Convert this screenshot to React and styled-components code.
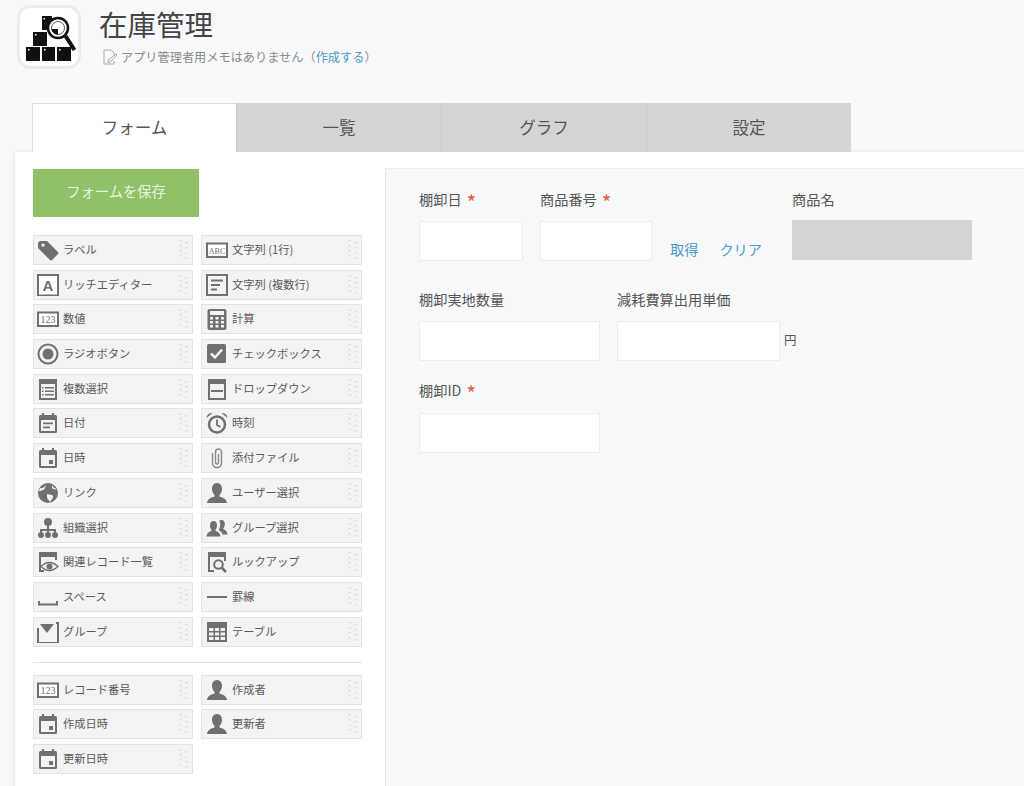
import React from 'react';
import styled, { createGlobalStyle } from 'styled-components';

const GlobalStyle = createGlobalStyle`
  html, body {
    margin: 0;
    height: 786px;
    overflow: hidden;
    background: #f8f9fb;
    font-family: "Noto Sans CJK JP", "Noto Sans", sans-serif;
    color: #555;
  }
  * { box-sizing: border-box; }
`;

const Header = styled.header`
  display: flex;
  gap: 18px;
  padding: 5px 0 0 17px;
`;

const AppIcon = styled.div`
  width: 64px;
  height: 64px;
  background: #fff;
  border: 3px solid #ececec;
  border-radius: 13px;
  display: flex;
  align-items: center;
  justify-content: center;
  svg { display: block; }
`;

const Title = styled.h1`
  margin: 0;
  font-size: 28.5px;
  line-height: 38px;
  font-weight: 400;
  color: #444;
`;

const Memo = styled.div`
  display: flex;
  align-items: center;
  gap: 3px;
  margin: 5px 0 0 3px;
  font-size: 12.2px;
  line-height: 18px;
  color: #8a8a8a;
  a { color: #4a9ac4; text-decoration: none; }
`;

const Tabs = styled.nav`
  position: relative;
  z-index: 2;
  display: flex;
  margin: 34px 0 0 32px;
`;

const Tab = styled.div`
  width: ${p => (p.$active ? 204 : 205)}px;
  height: 49px;
  display: flex;
  align-items: center;
  justify-content: center;
  font-size: 16.5px;
  color: #555;
  background: ${p => (p.$active ? '#fff' : '#d3d5d4')};
  border-left: 1px solid ${p => (p.$active ? '#ddd' : '#c6cac8')};
  border-top: 1px solid ${p => (p.$active ? '#ddd' : '#d3d5d4')};
  padding-bottom: 2px;
`;

const Panel = styled.main`
  display: flex;
  margin-left: 15px;
  height: 640px;
  background: #fff;
  padding-top: 16px;
  box-shadow: 0 0 5px rgba(0, 0, 0, 0.1);
`;

const Sidebar = styled.aside`
  width: 370px;
  flex: none;
  padding: 1px 0 0 18px;
`;

const SaveButton = styled.button`
  display: block;
  width: 166px;
  height: 48px;
  border: 0;
  padding: 0 0 5px;
  background: #8fc168;
  color: #e9f5df;
  font: inherit;
  font-size: 14.3px;
`;

const Palette = styled.div`
  display: grid;
  grid-template-columns: 160px 161px;
  column-gap: 8px;
  row-gap: 4.7px;
  width: 329px;
  margin-top: ${p => p.$top || 0}px;
`;

const Item = styled.div`
  display: flex;
  align-items: center;
  gap: 4px;
  height: 30px;
  padding: 0 3px;
  background: #f3f3f3;
  border: 1px solid #e2e2e2;
  font-size: 11.25px;
  color: #5a5a5a;
  white-space: nowrap;
  &:nth-child(even) { padding-left: 4px; }
  span { padding-bottom: 2px; }
`;

const Handle = styled.svg`
  margin-left: auto;
  flex: none;
`;

const Divider = styled.hr`
  width: 329px;
  margin: 15px 0 12px;
  border: 0;
  border-top: 1px solid #e3e3e3;
`;

const Canvas = styled.section`
  flex: 1;
  min-width: 0;
  background: #f8f9fb;
  border-top: 1px solid #eceeee;
  border-left: 1px solid #e6e8e8;
  padding: 20px 0 0 33px;
`;

const Row = styled.div`
  display: flex;
  gap: 17px;
  margin-bottom: ${p => p.$mb || 0}px;
`;

const Field = styled.div`
  display: flex;
  flex-direction: column;
  flex: none;
`;

const Label = styled.label`
  display: flex;
  gap: 5px;
  height: ${p => p.$h || 20}px;
  font-size: 14.2px;
  line-height: 20px;
  color: #555;
  margin-bottom: 12px;
`;

const Required = styled.span`
  color: #e8584c;
  font-size: 21px;
  line-height: 26px;
`;

const Input = styled.input`
  display: block;
  width: ${p => p.$w}px;
  height: 40px;
  padding: 0 6px;
  background: #fff;
  border: 1px solid #eceeee;
  outline: 0;
`;

const ReadOnlyBox = styled.div`
  width: 180px;
  height: 40px;
  margin-top: -1px;
  background: #d3d4d3;
`;

const Lookup = styled.div`
  display: flex;
  align-self: flex-end;
  gap: 21px;
  width: 106px;
  padding: 0 0 2px 1px;
  font-size: 14.2px;
  line-height: 20px;
  white-space: nowrap;
  a { color: #4a9ac4; text-decoration: none; }
`;

const InputWithUnit = styled.div`
  display: flex;
  align-items: center;
  gap: 4px;
  font-size: 12.5px;
  color: #555;
  span { padding-bottom: 4px; }
`;

const Frame = ({ children }) => (
  <svg width="22" height="22" viewBox="0 0 22 22" fill="#707070" style={{ flex: 'none' }}>
    {children}
  </svg>
);

const Num = ({ t, size }) => (
  <>
    <rect x="1" y="4.5" width="20" height="13.5" fill="#fff" stroke="#707070" strokeWidth="2" />
    <text x="11" y="14.8" textAnchor="middle" fontFamily="Liberation Serif, serif" fontSize={size} fill="#707070">{t}</text>
  </>
);

const CalTop = () => (
  <>
    <rect x="2" y="3" width="18" height="18" rx="1.5" fill="#707070" />
    <rect x="5" y="1" width="2" height="3" />
    <rect x="15" y="1" width="2" height="3" />
    <rect x="4" y="8" width="14" height="11" fill="#f3f3f3" />
  </>
);

const person = 'M11 1c3.5 0 5 3 5 6 0 3-1.5 5-2.5 6v1.5c3 1 7 2 7.5 6.5H1c.5-4.5 4.500-5.500 7.500-6.500V13C7.500 12 6 10 6 7c0-3 1.500-6 5-6z';

const glyphs = {
  tag: <path fillRule="evenodd" d="M1 5q0-3 3-3h6l11 11q1 1 0 2l-6 6q-1 1-2 0L1 9zM6 4.500a1.600 1.600 0 1 0 .01 0z" />,
  rich: (
    <>
      <rect x="1" y="1" width="20" height="20.500" fill="#fff" stroke="#707070" strokeWidth="2" />
      <text x="11" y="17" textAnchor="middle" fontFamily="Liberation Sans, sans-serif" fontWeight="700" fontSize="15" fill="#707070">A</text>
    </>
  ),
  num: <Num t="123" size="10" />,
  abc: <Num t="ABC" size="8" />,
  multi: (
    <>
      <rect x="1" y="1" width="20" height="20" fill="none" stroke="#707070" strokeWidth="2" />
      <path d="M5 5.500h12v2H5zM5 10h9v2H5zM5 14.500h6v2H5z" />
    </>
  ),
  calc: (
    <>
      <rect x="1.500" y="1" width="19" height="21" rx="2" />
      <rect x="4" y="3" width="14" height="4" fill="#f3f3f3" />
      <path d="M4 9h3v2.500H4zM9.500 9h3v2.500h-3zM15 9h3v2.500h-3zM4 13h3v2.500H4zM9.500 13h3v2.500h-3zM15 13h3v2.500h-3zM4 17h3v2.500H4zM9.500 17h3v2.500h-3zM15 17h3v2.500h-3z" fill="#f3f3f3" />
    </>
  ),
  radio: (
    <>
      <circle cx="11" cy="11" r="9.500" fill="none" stroke="#707070" strokeWidth="2" />
      <circle cx="11" cy="11" r="5.500" />
    </>
  ),
  check: (
    <>
      <rect x="1" y="1" width="19" height="19" rx="1.500" />
      <path d="M5 10.500l4 4 7-8" fill="none" stroke="#f3f3f3" strokeWidth="2.500" />
    </>
  ),
  list: (
    <>
      <rect x="2" y="1" width="18" height="21" />
      <rect x="4" y="6" width="14" height="14" fill="#f3f3f3" />
      <path d="M5 9h1.500v1.500H5zM8 9h9v1.500H8zM5 12.500h1.500V14H5zM8 12.500h9V14H8zM5 16h1.500v1.500H5zM8 16h9v1.500H8z" />
    </>
  ),
  dropdown: (
    <>
      <rect x="2" y="1" width="18" height="21" />
      <rect x="4" y="6" width="14" height="14" fill="#f3f3f3" />
      <rect x="5" y="12" width="12" height="2" />
    </>
  ),
  date: (
    <>
      <CalTop />
      <path d="M6 10.500h10v1.800H6zM6 14.500h7v1.800H6z" />
    </>
  ),
  datetime: (
    <>
      <CalTop />
      <rect x="12" y="13" width="4" height="4" />
    </>
  ),
  clock: (
    <>
      <circle cx="11" cy="12.500" r="8" fill="none" stroke="#707070" strokeWidth="2.500" />
      <path d="M11 7.500v5.500l3.500 2" fill="none" stroke="#707070" strokeWidth="1.800" />
      <path d="M.5 6Q1 1 6.500 1zM21.500 6Q21 1 15.500 1z" />
    </>
  ),
  clip: <path d="M6.500 6v10a4.500 4.500 0 0 0 9 0V5a3 3 0 0 0-6 0v10.500a1.500 1.500 0 0 0 3 0V7" fill="none" stroke="#8a8a8a" strokeWidth="1.400" />,
  link: (
    <>
      <circle cx="11" cy="11" r="10" />
      <path d="M3 6c3 1 4-1 6-3-1 3-1 4-3 5S3 9 2 9zM10 12l5 1c2 1 1 3 0 4l-2 3c-1-2-3-3-3-5zM15 3c1 2 2 3 5 4-2 1-4 0-5-1z" fill="#f3f3f3" />
    </>
  ),
  user: <path d={person} />,
  org: (
    <>
      <circle cx="11" cy="5" r="4" />
      <path d="M10 8h2v4h7v3h-2v-1h-5v1h-2v-1H5v1H3v-3h7z" />
      <circle cx="4" cy="18" r="3" />
      <circle cx="11" cy="18" r="3" />
      <circle cx="18" cy="18" r="3" />
    </>
  ),
  users: (
    <>
      <path d="M7.500 4c2.500 0 3.500 2 3.500 4.500S10 12 9.500 13v1c2 .7 4.500 1.500 5 5.500H.5c.5-4 3-4.800 5-5.500v-1C5 12 4 11 4 8.500S5 4 7.500 4z" />
      <path d="M15.500 3c2.300 0 3.300 2 3.300 4.200s-1 3.300-1.500 4v1c1.700.6 3.700 1.300 4.200 5.300h-5c-.5-2-2-3.500-3.500-4v-1.500c.8-1 1.200-2.500 1.200-4.500 0-1.500-.4-3-1-4 .6-.3 1.500-.5 2.300-.5z" />
    </>
  ),
  related: (
    <>
      <path d="M2 1h18v8h-2V6H4v13h3v2H2z" />
      <path d="M4 15.500Q12 7.500 21 15.500 12 23.500 4 15.500z" fill="#f3f3f3" stroke="#707070" strokeWidth="1.300" />
      <circle cx="12.500" cy="15.500" r="3" />
    </>
  ),
  lookup: (
    <>
      <path d="M2 1h18v9h-2V6H4v13h4v2H2z" />
      <circle cx="12.500" cy="13.500" r="4.300" fill="none" stroke="#707070" strokeWidth="2" />
      <path d="M15.500 16.500l4.500 4.500" stroke="#707070" strokeWidth="2.500" />
    </>
  ),
  space: <path d="M2 15v3.500h18V15" fill="none" stroke="#707070" strokeWidth="2" />,
  line: <rect x="1" y="10" width="20" height="2" />,
  group: (
    <>
      <path d="M3 3h14l-7 9z" />
      <path d="M1 7v15h20V2h-2" fill="none" stroke="#707070" strokeWidth="2" />
    </>
  ),
  table: (
    <>
      <rect x="1" y="1" width="20" height="20" />
      <path d="M3 7h4.500v3H3zM9 7h4v3H9zM14.500 7H19v3h-4.500zM3 11.500h4.500v3H3zM9 11.500h4v3H9zM14.500 11.500H19v3h-4.500zM3 16h4.500v3H3zM9 16h4v3H9zM14.500 16H19v3h-4.500z" fill="#f3f3f3" />
    </>
  ),
};

const fields = [
  ['tag', 'ラベル'], ['abc', '文字列 (1行)'],
  ['rich', 'リッチエディター'], ['multi', '文字列 (複数行)'],
  ['num', '数値'], ['calc', '計算'],
  ['radio', 'ラジオボタン'], ['check', 'チェックボックス'],
  ['list', '複数選択'], ['dropdown', 'ドロップダウン'],
  ['date', '日付'], ['clock', '時刻'],
  ['datetime', '日時'], ['clip', '添付ファイル'],
  ['link', 'リンク'], ['user', 'ユーザー選択'],
  ['org', '組織選択'], ['users', 'グループ選択'],
  ['related', '関連レコード一覧'], ['lookup', 'ルックアップ'],
  ['space', 'スペース'], ['line', '罫線'],
  ['group', 'グループ'], ['table', 'テーブル'],
];

const systemFields = [
  ['num', 'レコード番号'], ['user', '作成者'],
  ['datetime', '作成日時'], ['user', '更新者'],
  ['datetime', '更新日時'],
];

const Grip = () => (
  <Handle width="10" height="24" viewBox="0 0 10 24" fill="none" stroke="#d4d4d4" strokeWidth="1">
    {[2, 7, 12, 17].map(y => (
      <g key={y}>
        <path d={`M0 ${y + 1.500}l1.500-1.500 1.500 1.500`} />
        <path d={`M6 ${y + 3.500}l1.500-1.500 1.500 1.500`} />
      </g>
    ))}
  </Handle>
);

const renderItems = list => list.map(([icon, text]) => (
  <Item key={text}>
    <Frame>{glyphs[icon]}</Frame>
    <span>{text}</span>
    <Grip />
  </Item>
));

const StockIcon = () => (
  <svg width="58" height="58" viewBox="20 8 58 58">
    <path d="M42 16h10v14H42z" fill="#111" />
    <path d="M33 32h14v14H33zM26 47h14v14H26zM42 47h13v14H42zM57 47h14v14H57z" fill="#111" />
    <path d="M43.500 18h1.500v1.500h-1.500zM35 34h1.500v1.500H35zM28 49h1.500v1.500H28zM44 49h1.500v1.500H44zM59 49h1.500v1.500H59z" fill="#fff" />
    <circle cx="58" cy="28" r="10" fill="#fff" stroke="#111" strokeWidth="2.500" />
    <circle cx="58" cy="28" r="6.500" fill="none" stroke="#555" strokeWidth="1" />
    <path d="M51.500 29h6.500v5.500a6.500 6.500 0 0 1-6.500-5.500z" fill="#111" />
    <path d="M65.500 36l9 14" stroke="#111" strokeWidth="4" />
  </svg>
);

const MemoIcon = () => (
  <svg width="16" height="16" viewBox="0 0 16 16" fill="none" stroke="#aaa" strokeWidth="1">
    <path d="M2 1h7l3 3v3M2 1v14h10v-3" />
    <path d="M6 11l8-6 1 1-7 7-2 .5z" />
  </svg>
);

export default function App() {
  return (
    <>
      <GlobalStyle />
      <Header>
        <AppIcon><StockIcon /></AppIcon>
        <div>
          <Title>在庫管理</Title>
          <Memo>
            <MemoIcon />
            <span>アプリ管理者用メモはありません（<a href="#memo">作成する</a>）</span>
          </Memo>
        </div>
      </Header>
      <Tabs>
        <Tab $active>フォーム</Tab>
        <Tab>一覧</Tab>
        <Tab>グラフ</Tab>
        <Tab>設定</Tab>
      </Tabs>
      <Panel>
        <Sidebar>
          <SaveButton>フォームを保存</SaveButton>
          <Palette $top={18}>{renderItems(fields)}</Palette>
          <Divider />
          <Palette>{renderItems(systemFields)}</Palette>
        </Sidebar>
        <Canvas>
          <Row $mb={28}>
            <Field>
              <Label>棚卸日<Required>*</Required></Label>
              <Input $w={104} />
            </Field>
            <Field>
              <Label>商品番号<Required>*</Required></Label>
              <Input $w={112} />
            </Field>
            <Lookup>
              <a href="#get">取得</a>
              <a href="#clear">クリア</a>
            </Lookup>
            <Field>
              <Label>商品名</Label>
              <ReadOnlyBox />
            </Field>
          </Row>
          <Row $mb={19}>
            <Field>
              <Label>棚卸実地数量</Label>
              <Input $w={181} />
            </Field>
            <Field>
              <Label>減耗費算出用単価</Label>
              <InputWithUnit>
                <Input $w={163} />
                <span>円</span>
              </InputWithUnit>
            </Field>
          </Row>
          <Row>
            <Field>
              <Label $h={21}>棚卸ID<Required>*</Required></Label>
              <Input $w={181} />
            </Field>
          </Row>
        </Canvas>
      </Panel>
    </>
  );
}
